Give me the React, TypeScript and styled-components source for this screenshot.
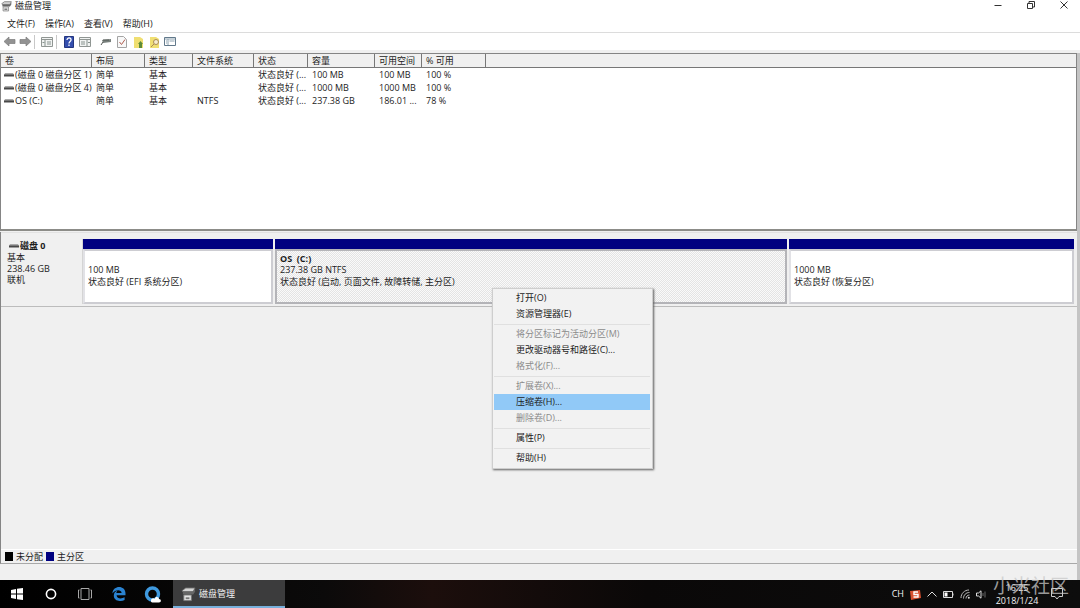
import React from "react";
import styled, { createGlobalStyle, css } from "styled-components";

const Global = createGlobalStyle`
  * { box-sizing: border-box; }
  body { margin: 0; background: #f0f0f0; }
  body, button, table { font-family: "Open Sans", "Noto Sans CJK SC", sans-serif; font-size: 9px; line-height: 12px; color: #1c1c1c; }
  button { border: 0; padding: 0; margin: 0; background: none; color: inherit; }
  svg { display: block; flex: none; }
`;

const Screen = styled.div`
  min-height: 100vh;
  display: flex;
  flex-direction: column;
`;
const TitleBar = styled.header`
  display: flex;
  justify-content: space-between;
  height: 12px;
  padding-left: 1px;
  background: #fff;
`;
const Title = styled.h1`
  display: flex;
  align-items: center;
  gap: 3px;
  margin: 0;
  font-size: 9px;
  font-weight: 400;
`;
const WindowButtons = styled.div`
  display: flex;
`;
const WindowButton = styled.button`
  width: 33px;
  height: 9px;
  display: grid;
  place-items: center;
`;
const MenuBar = styled.nav`
  display: flex;
  gap: 10px;
  padding: 6px 7px 2px;
  background: #fff;
  border-bottom: 1px solid #dcdcdc;
`;
const MenuButton = styled.button`
  white-space: nowrap;
`;
const Toolbar = styled.div`
  display: flex;
  align-items: center;
  height: 20px;
  padding: 0 1px;
  background: #fff;
  border-bottom: 3px solid #f0f0f0;
`;
const ToolGroup = styled.div`
  display: flex;
  & + & { margin-left: 5px; }
`;
const ToolButton = styled.button`
  width: 16px;
  height: 14px;
  display: grid;
  place-items: center;
`;
const ToolDivider = styled.span`
  width: 1px;
  height: 14px;
  margin: 0 4px 0 1px;
  background: #c8c8c8;
`;
const Panes = styled.main`
  flex: 1;
  display: flex;
  flex-direction: column;
  border-right: 3px solid #c4c4c4;
`;
const ListPane = styled.section`
  height: 178px;
  background: #fff;
  border: 1px solid #858585;
  border-bottom: 2px solid #8c8c88;
`;
const VolumeTable = styled.table`
  width: 100%;
  table-layout: fixed;
  border-collapse: separate;
  border-spacing: 0;
  th, td {
    padding: 0 0 0 4px;
    text-align: left;
    font-weight: 400;
    white-space: nowrap;
    overflow: hidden;
    height: 13px;
  }
  td:first-child { padding-left: 3px; }
  th {
    height: 14px;
    background: #f0f0f0;
    border-right: 1px solid #777;
    border-bottom: 1px solid #777;
  }
  th:last-child { border-right: 0; }
`;
const VolumeName = styled.span`
  display: flex;
  align-items: center;
  gap: 1px;
`;
const GraphPane = styled.section`
  flex: 1;
  display: flex;
  flex-direction: column;
  margin-top: 1px;
  border-left: 1px solid #858585;
  border-bottom: 1px solid #a8a8a8;
`;
const DiskRow = styled.div`
  display: flex;
  height: 75px;
  padding: 6px 3px 2px 0;
  border-top: 1px solid #e2e2e2;
  border-bottom: 1px solid #bcbcbc;
`;
const DiskInfo = styled.div`
  width: 82px;
  padding: 1px 6px;
  line-height: 11px;
  border-right: 1px solid #d4d4d4;
`;
const DiskTitle = styled.strong`
  display: flex;
  align-items: center;
  gap: 1px;
  line-height: 12px;
  padding-left: 2px;
`;
const Partitions = styled.div`
  flex: 1;
  display: flex;
  gap: 2px;
`;
const Partition = styled.div<{ $share: number }>`
  flex: ${(p) => p.$share} 1 0;
  min-width: 0;
  display: flex;
  flex-direction: column;
  &::before {
    content: "";
    height: 10px;
    background: #000080;
  }
`;
const PartitionBody = styled.div<{ $selected?: boolean }>`
  flex: 1;
  padding: 2px 3px;
  line-height: 12px;
  white-space: nowrap;
  border: 2px solid #cdcdd2;
  border-left-color: #e2e2e6;
  background: #fff;
  ${(p) =>
    p.$selected &&
    css`
      border-color: #b4b4b8;
      background: repeating-conic-gradient(#e4e4e4 0 25%, #fafafa 0 50%) 0 0 / 2px 2px;
    `}
`;
const PartitionName = styled.strong`
  display: block;
  height: 11px;
  white-space: pre;
`;
const Legend = styled.ul`
  display: flex;
  align-items: center;
  gap: 3px;
  height: 14px;
  margin: auto 0 0;
  padding: 0 4px;
  list-style: none;
  border-top: 1px solid #fff;
`;
const LegendItem = styled.li<{ $color: string }>`
  display: flex;
  align-items: center;
  gap: 3px;
  &::before {
    content: "";
    width: 8px;
    height: 9px;
    background: ${(p) => p.$color};
  }
`;
const StatusStrip = styled.footer`
  height: 16px;
`;
const ContextMenu = styled.div`
  position: absolute;
  left: 492px;
  top: 288px;
  width: 161px;
  padding: 1px 2px 2px 1px;
  background: #f2f2f2;
  border: 1px solid #cecece;
  box-shadow: 1px 1px 2px #606060;
`;
const MenuGroup = styled.div`
  padding-bottom: 2px;
  & + & {
    padding-top: 1px;
    border-top: 1px solid #e0e0e0;
  }
  &:last-child { padding-bottom: 0; }
`;
const ContextItem = styled.button<{ $active?: boolean }>`
  display: block;
  width: 100%;
  height: 16px;
  padding-left: 22px;
  text-align: left;
  background: ${(p) => (p.$active ? "#91c9f7" : "transparent")};
  &:disabled { color: #8b8b8b; }
`;
const Taskbar = styled.footer`
  position: relative;
  display: flex;
  align-items: stretch;
  height: 28px;
  background: linear-gradient(90deg, #000 0, #0b0a0a 30%, #1c0e0c 40%, #0a0808 60%, #0d0d0d 100%);
  color: #f2f2f2;
`;
const TaskButton = styled.button`
  width: 34px;
  display: grid;
  place-items: center;
`;
const TaskApp = styled.button`
  display: flex;
  align-items: center;
  gap: 3px;
  width: 112px;
  margin-left: 3px;
  padding: 2px 0 0 8px;
  background: #3c3c3d;
  border-bottom: 2px solid #78b0dc;
`;
const Tray = styled.div`
  display: flex;
  align-items: center;
  gap: 6px;
  margin-left: auto;
  padding-right: 17px;
`;
const Clock = styled.time`
  width: 48px;
  margin-right: 4px;
  text-align: center;
  line-height: 13px;
  span { display: block; }
`;
const Watermark = styled.span`
  position: absolute;
  right: 11px;
  top: -8px;
  font-size: 19px;
  line-height: 26px;
  font-family: "Noto Sans CJK SC", sans-serif;
  color: rgba(200, 200, 200, 0.75);
`;

const DiskIcon = () => (
  <svg width="10" height="6" viewBox="0 0 10 6">
    <path d="M1 1h8l1 2H0z" fill="#a9a9a9" />
    <path d="M0 2.500h10v2H0z" fill="#484848" />
  </svg>
);
const ManagerIcon = ({ size = 11 }: { size?: number }) => (
  <svg width={size} height={size} viewBox="0 0 16 16">
    <path d="M1 4l4-3h10l-2 4H2z" fill="#d4d4d4" stroke="#666" />
    <path d="M2 5h11l2-3v3l-2 3H2z" fill="#666" />
    <path d="M3 8.500h8v6H3z" fill="#e4e4e4" stroke="#777" />
    <path d="M5 11h4v2H5z" fill="#777" />
  </svg>
);
const Arrow = ({ right }: { right?: boolean }) => (
  <svg width="13" height="11" viewBox="0 0 13 11">
    <path d={right ? "M12 5.500L7 1v2.500H1v4h6V10z" : "M1 5.500L6 1v2.500h6v4H6V10z"} fill="#929292" stroke="#7b7b7b" strokeWidth=".7" />
  </svg>
);
const Sheet = ({ flip }: { flip?: boolean }) => (
  <svg width="12" height="10" viewBox="0 0 12 10">
    <path d="M.5.5h11v9H.5z" fill="#f1f3f2" stroke="#909693" />
    <path d="M1 2.500h10" stroke="#909693" />
    <path d={flip ? "M8 3v6M2 5h4M2 7h4M9 5.500h2" : "M4 3v6M6 5h4M6 7h4M1.500 5.500h2"} stroke="#87928e" />
  </svg>
);
const HelpIcon = () => (
  <svg width="10" height="12" viewBox="0 0 10 12">
    <path d="M.5.5h9v11h-9z" fill="#344fae" stroke="#24367f" />
    <path d="M3 4c0-3 4.500-2.500 4 0C7 5.500 5 5.500 5 7.500M5 8.500V10" fill="none" stroke="#fff" strokeWidth="1.300" />
  </svg>
);
const ConnectIcon = () => (
  <svg width="12" height="10" viewBox="0 0 12 10">
    <path d="M2 3l9-1v3l-8 1z" fill="#79817d" />
    <path d="M3 5L1 8M3 3h6" stroke="#515653" fill="none" />
  </svg>
);
const CheckSheet = () => (
  <svg width="10" height="12" viewBox="0 0 10 12">
    <path d="M.5.5h6l3 3v8h-9z" fill="#f8f8f8" stroke="#a4a4a4" />
    <path d="M2.500 6l2 2.500L8 3.500" fill="none" stroke="#af5d50" />
  </svg>
);
const FolderSheet = ({ search }: { search?: boolean }) => (
  <svg width="11" height="12" viewBox="0 0 11 12">
    <path d="M1 1h6l3 2v9H1z" fill="#f0df72" />
    {search ? (
      <g fill="none" stroke="#a98b57"><circle cx="7" cy="6" r="2.500" fill="#f7edcd" /><path d="M5 8l-3 3" /></g>
    ) : (
      <path d="M7.500 5L10 8H9v4H6V8H5z" fill="#5d8b39" />
    )}
  </svg>
);
const PanelIcon = () => (
  <svg width="12" height="9" viewBox="0 0 12 9">
    <path d="M.5.5h11v8H.5z" fill="#fff" stroke="#62798b" />
    <path d="M1 2h10M4 2v6M2 4h1M2 6h1M5.500 4h5" stroke="#8da2b0" />
  </svg>
);

const volumes = [
  ["(磁盘 0 磁盘分区 1)", "简单", "基本", "", "状态良好 (...", "100 MB", "100 MB", "100 %"],
  ["(磁盘 0 磁盘分区 4)", "简单", "基本", "", "状态良好 (...", "1000 MB", "1000 MB", "100 %"],
  ["OS (C:)", "简单", "基本", "NTFS", "状态良好 (...", "237.38 GB", "186.01 ...", "78 %"],
];
const columns = ["卷", "布局", "类型", "文件系统", "状态", "容量", "可用空间", "% 可用", ""];
const widths = [91, 53, 48, 61, 54, 67, 47, 64];
const menuGroups = [
  [{ t: "打开(O)" }, { t: "资源管理器(E)" }],
  [{ t: "将分区标记为活动分区(M)", off: true }, { t: "更改驱动器号和路径(C)..." }, { t: "格式化(F)...", off: true }],
  [{ t: "扩展卷(X)...", off: true }, { t: "压缩卷(H)...", active: true }, { t: "删除卷(D)...", off: true }],
  [{ t: "属性(P)" }],
  [{ t: "帮助(H)" }],
] as { t: string; off?: boolean; active?: boolean }[][];

export default function App() {
  return (
    <Screen>
      <Global />
      <TitleBar>
        <Title><ManagerIcon />磁盘管理</Title>
        <WindowButtons>
          <WindowButton aria-label="最小化">
            <svg width="8" height="8" viewBox="0 0 8 8"><path d="M.5 4.500h7" stroke="#333" /></svg>
          </WindowButton>
          <WindowButton aria-label="还原">
            <svg width="8" height="8" viewBox="0 0 8 8"><path d="M.5 2.500h5v5h-5zM2 2V.5h5.500V6H6" fill="none" stroke="#333" /></svg>
          </WindowButton>
          <WindowButton aria-label="关闭">
            <svg width="8" height="8" viewBox="0 0 8 8"><path d="M.5.500l7 7m0-7l-7 7" stroke="#333" /></svg>
          </WindowButton>
        </WindowButtons>
      </TitleBar>
      <MenuBar>
        {["文件(F)", "操作(A)", "查看(V)", "帮助(H)"].map((m) => <MenuButton key={m}>{m}</MenuButton>)}
      </MenuBar>
      <Toolbar>
        <ToolButton aria-label="后退"><Arrow /></ToolButton>
        <ToolButton aria-label="前进"><Arrow right /></ToolButton>
        <ToolDivider />
        <ToolButton aria-label="显示控制台树"><Sheet /></ToolButton>
        <ToolDivider />
        <ToolGroup>
          <ToolButton aria-label="帮助"><HelpIcon /></ToolButton>
          <ToolButton aria-label="操作窗格"><Sheet flip /></ToolButton>
        </ToolGroup>
        <ToolGroup>
          <ToolButton aria-label="刷新"><ConnectIcon /></ToolButton>
          <ToolButton aria-label="属性"><CheckSheet /></ToolButton>
          <ToolButton aria-label="打开"><FolderSheet /></ToolButton>
          <ToolButton aria-label="浏览"><FolderSheet search /></ToolButton>
          <ToolButton aria-label="列表"><PanelIcon /></ToolButton>
        </ToolGroup>
      </Toolbar>
      <Panes>
        <ListPane>
          <VolumeTable>
            <colgroup>
              {widths.map((w, i) => <col key={i} width={w} />)}
              <col />
            </colgroup>
            <thead><tr>{columns.map((c) => <th key={c}>{c}</th>)}</tr></thead>
            <tbody>
              {volumes.map(([name, ...rest]) => (
                <tr key={name}>
                  <td><VolumeName><DiskIcon />{name}</VolumeName></td>
                  {rest.map((v, i) => <td key={i}>{v}</td>)}
                  <td />
                </tr>
              ))}
            </tbody>
          </VolumeTable>
        </ListPane>
        <GraphPane>
          <DiskRow>
            <DiskInfo>
              <DiskTitle><DiskIcon />磁盘 0</DiskTitle>
              基本<br />238.46 GB<br />联机
            </DiskInfo>
            <Partitions>
              <Partition $share={190}>
                <PartitionBody><PartitionName />100 MB<br />状态良好 (EFI 系统分区)</PartitionBody>
              </Partition>
              <Partition $share={512}>
                <PartitionBody $selected><PartitionName>OS  (C:)</PartitionName>237.38 GB NTFS<br />状态良好 (启动, 页面文件, 故障转储, 主分区)</PartitionBody>
              </Partition>
              <Partition $share={285}>
                <PartitionBody><PartitionName />1000 MB<br />状态良好 (恢复分区)</PartitionBody>
              </Partition>
            </Partitions>
          </DiskRow>
          <Legend>
            <LegendItem $color="#000">未分配</LegendItem>
            <LegendItem $color="#000080">主分区</LegendItem>
          </Legend>
        </GraphPane>
        <StatusStrip />
      </Panes>
      <ContextMenu>
        {menuGroups.map((g, i) => (
          <MenuGroup key={i}>
            {g.map((m) => <ContextItem key={m.t} disabled={m.off} $active={m.active}>{m.t}</ContextItem>)}
          </MenuGroup>
        ))}
      </ContextMenu>
      <Taskbar>
        <TaskButton aria-label="开始">
          <svg width="12" height="12" viewBox="0 0 12 12"><path d="M0 2l5-1v4.500H0zM6 .800L12 0v5.500H6zM0 6.500h5V11l-5-1zM6 6.500h6V12l-6-.8z" fill="#fff" /></svg>
        </TaskButton>
        <TaskButton aria-label="搜索">
          <svg width="12" height="12" viewBox="0 0 12 12"><circle cx="6" cy="6" r="4.600" fill="none" stroke="#fff" strokeWidth="1.600" /></svg>
        </TaskButton>
        <TaskButton aria-label="任务视图">
          <svg width="14" height="12" viewBox="0 0 14 12"><path d="M3 .5h8v11H3zM1.500 2H.5v8h1M12.500 2h1v8h-1" fill="none" stroke="#a8a8a8" /></svg>
        </TaskButton>
        <TaskButton aria-label="Edge">
          <svg width="14" height="14" viewBox="0 0 14 14"><path d="M13.500 8.300H4.600c.3 3.700 5 3.800 8 2V13C8.500 15 1.800 14.300 1.800 8.500 1.800 6 3.400 4.200 5.600 3.500 4.700 4.300 4.500 5 4.400 6h5.200C9.500 2.500 3.500 2 .4 6.500 1-2.200 13.500-2 13.500 6.500z" fill="#2a82d0" /></svg>
        </TaskButton>
        <TaskButton aria-label="浏览器">
          <svg width="18" height="17" viewBox="0 0 18 17"><circle cx="8.500" cy="8" r="6" fill="none" stroke="#3f9ae0" strokeWidth="3.400" /><path d="M7 15.500c-.5-3 2.500-4 3.500-2.500 1-3 4.500-2 4.500 0 2.500 0 2.500 3.500 0 3.500H9c-1 0-1.800-.3-2-1z" fill="#fff" /></svg>
        </TaskButton>
        <TaskApp><ManagerIcon size={15} />磁盘管理</TaskApp>
        <Tray>
          <span>CH</span>
          <svg width="11" height="11" viewBox="0 0 11 11"><path d="M0 2l10-1 1 8-10 2z" fill="#d9512f" /><path d="M8 3H4v2.500h4V8H3.500" fill="none" stroke="#fff" strokeWidth="1.400" /></svg>
          <svg width="10" height="6" viewBox="0 0 10 6"><path d="M.5 5.500L5 1l4.500 4.500" fill="none" stroke="#ddd" /></svg>
          <svg width="11" height="7" viewBox="0 0 11 7"><path d="M.5.5h9v6h-9zM10 2.500v2" fill="none" stroke="#ddd" /><path d="M1.500 1.500h3v4h-3z" fill="#fff" /></svg>
          <svg width="10" height="10" viewBox="0 0 10 10"><path d="M1 9C1 4.500 4.500 1 9 1M3.500 9.500C3.500 6 6 3.500 9.500 3.500M6 9.500C6 7.500 7.500 6 9.500 6" fill="none" stroke="#bbb" /><circle cx="8.800" cy="8.800" r="1" fill="#ddd" /></svg>
          <svg width="11" height="9" viewBox="0 0 11 9"><path d="M.5 3h2L5 .8v7.400L2.500 6h-2z" fill="none" stroke="#ddd" /><path d="M7 3v3M9 1.500v6" stroke="#666" /></svg>
          <Clock><span>16:25</span><span>2018/1/24</span></Clock>
          <svg width="12" height="12" viewBox="0 0 12 12"><path d="M.5.5h11v8H8l-2 2.500-2-2.500H.5z" fill="none" stroke="#ccc" /></svg>
        </Tray>
        <Watermark>小米社区</Watermark>
      </Taskbar>
    </Screen>
  );
}
